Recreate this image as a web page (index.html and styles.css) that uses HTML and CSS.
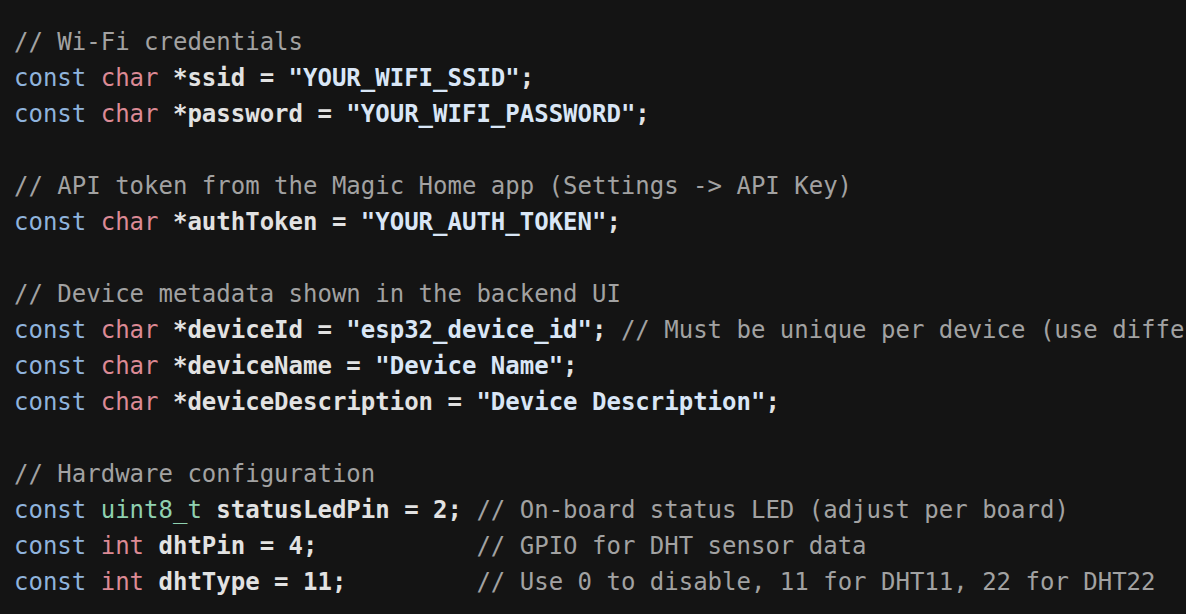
FILE: index.html
```html
<!DOCTYPE html>
<html>
<head>
<meta charset="utf-8">
<link rel="stylesheet" href="styles.css">
</head>
<body>
<pre class="code"><span class="cm">// Wi-Fi credentials</span>
<span class="kw">const</span> <span class="ty">char</span> <span class="id">*ssid = </span><span class="st">"YOUR_WIFI_SSID"</span><span class="id">;</span>
<span class="kw">const</span> <span class="ty">char</span> <span class="id">*password = </span><span class="st">"YOUR_WIFI_PASSWORD"</span><span class="id">;</span>

<span class="cm">// API token from the Magic Home app (Settings -&gt; API Key)</span>
<span class="kw">const</span> <span class="ty">char</span> <span class="id">*authToken = </span><span class="st">"YOUR_AUTH_TOKEN"</span><span class="id">;</span>

<span class="cm">// Device metadata shown in the backend UI</span>
<span class="kw">const</span> <span class="ty">char</span> <span class="id">*deviceId = </span><span class="st">"esp32_device_id"</span><span class="id">;</span> <span class="cm">// Must be unique per device (use diffe</span>
<span class="kw">const</span> <span class="ty">char</span> <span class="id">*deviceName = </span><span class="st">"Device Name"</span><span class="id">;</span>
<span class="kw">const</span> <span class="ty">char</span> <span class="id">*deviceDescription = </span><span class="st">"Device Description"</span><span class="id">;</span>

<span class="cm">// Hardware configuration</span>
<span class="kw">const</span> <span class="ty2">uint8_t</span> <span class="id">statusLedPin = 2;</span> <span class="cm">// On-board status LED (adjust per board)</span>
<span class="kw">const</span> <span class="ty">int</span> <span class="id">dhtPin = 4;</span>           <span class="cm">// GPIO for DHT sensor data</span>
<span class="kw">const</span> <span class="ty">int</span> <span class="id">dhtType = 11;</span>         <span class="cm">// Use 0 to disable, 11 for DHT11, 22 for DHT22</span></pre>
</body>
</html>
```

FILE: styles.css
```css
html, body {
  margin: 0;
  padding: 0;
  background: #141414;
  overflow: hidden;
}
body {
  width: 1186px;
  height: 614px;
}
.code {
  margin: 0;
  padding: 24px 0 0 14px;
  font-family: "DejaVu Sans Mono", "Liberation Mono", monospace;
  font-size: 24px;
  line-height: 36px;
  color: #e4e4e4;
  white-space: pre;
}
.cm { color: #a2a2a2; }
.kw { color: #8fb3dc; }
.ty { color: #dc8a95; }
.ty2 { color: #8fd1b0; }
.id { color: #e2e2e2; font-weight: bold; }
.st { color: #d9e6f6; font-weight: bold; }
```
